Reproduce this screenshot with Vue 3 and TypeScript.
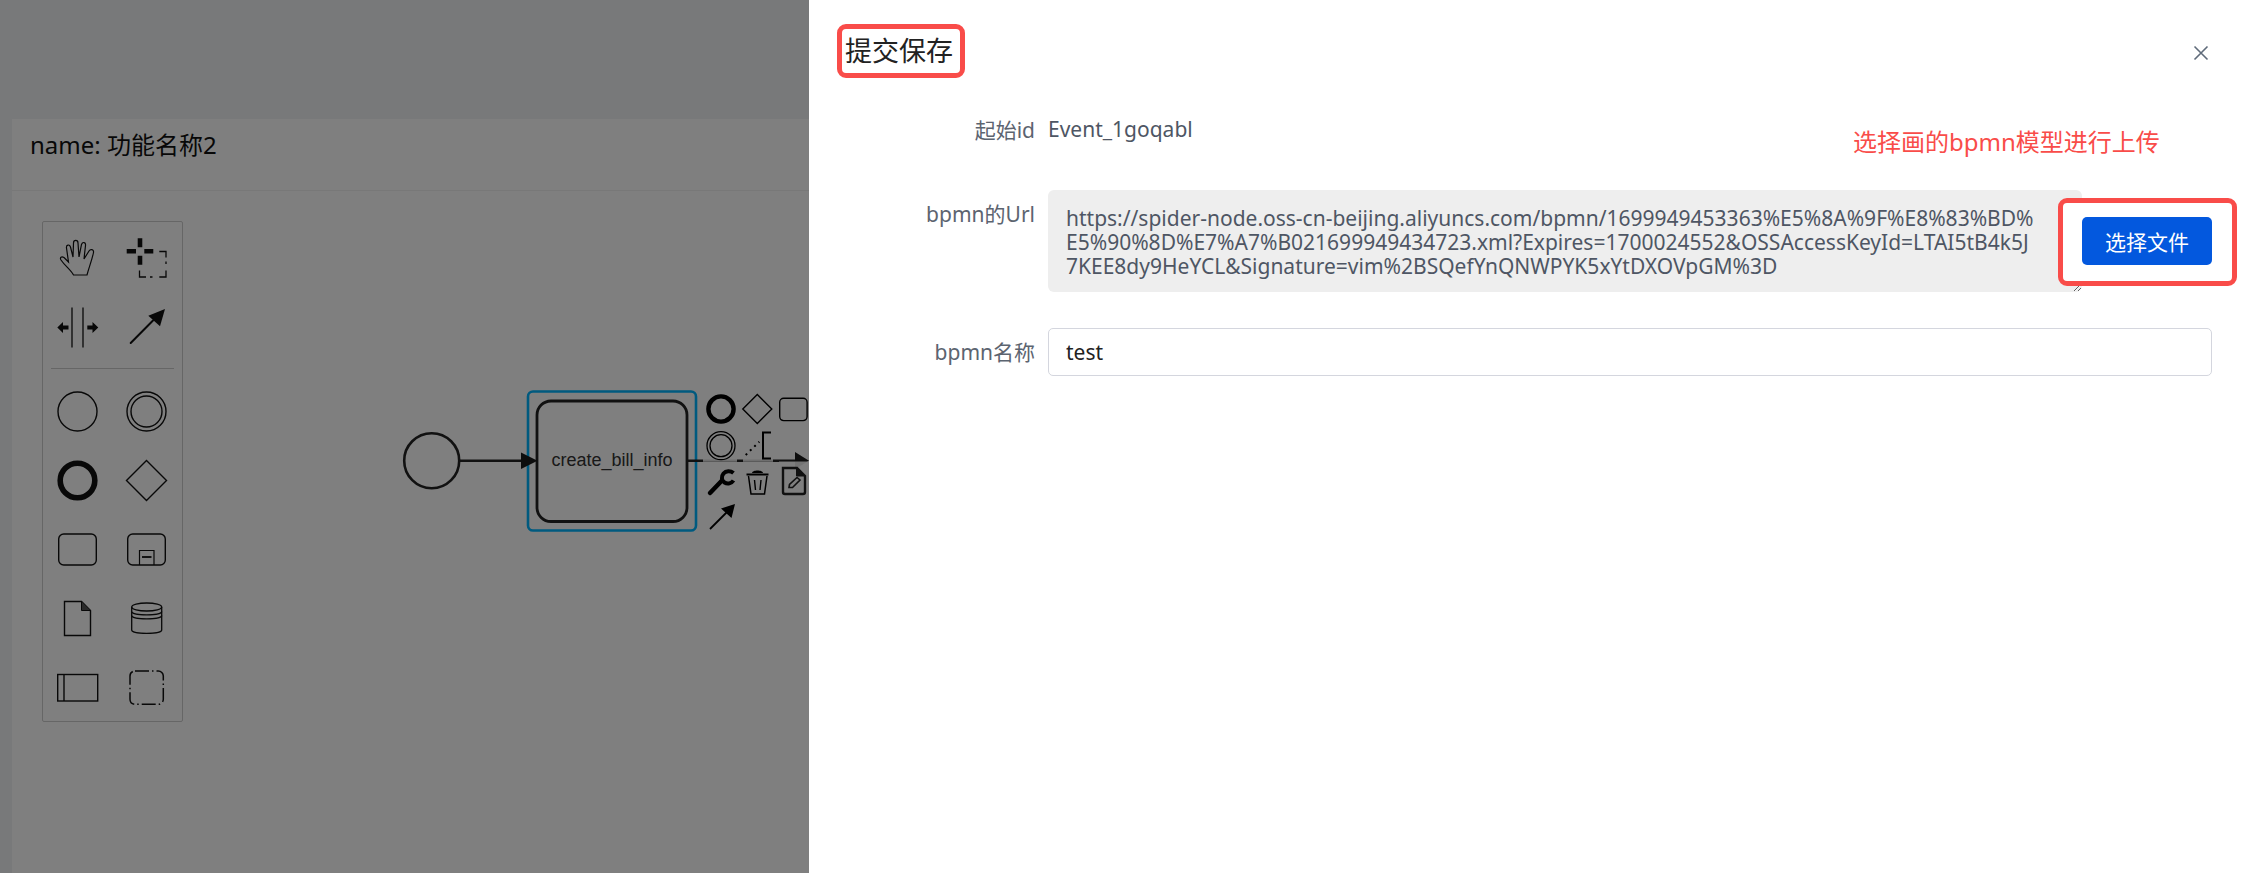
<template>
  <div class="page">
    <div class="card">
      <div class="card-head">name: 功能名称2</div>
      <div class="canvas">
        <!-- diagram uses page coordinates, so the viewBox starts at the canvas origin -->
        <svg class="diagram" width="800" height="680" viewBox="12 192 800 680">
          <rect x="528" y="392.5" width="168" height="139" rx="5" fill="none" stroke="#00b4ff" stroke-width="2.6" />
          <circle cx="431.7" cy="461.7" r="27.5" fill="none" stroke="#222" stroke-width="2.6" />
          <path d="M460 461.7H524" stroke="#222" stroke-width="2.6" />
          <rect x="537" y="402" width="150" height="120.5" rx="14" fill="#fff" fill-opacity="0" stroke="#222" stroke-width="2.8" />
          <path d="M521 453.5L537.5 461.7L521 470Z" fill="#1a1a1a" />
          <text x="612" y="467" text-anchor="middle" class="task-label">create_bill_info</text>

          <path d="M688 461.7H796" stroke="#222" stroke-width="2.6" />
          <path d="M795 453L809 461.7L795 470Z" fill="#1a1a1a" />
          <!-- context pad entries sit over the outgoing flow and wash it out -->
          <rect x="703" y="429" width="34" height="33.5" fill="#fff" fill-opacity="0.85" />
          <rect x="743" y="429" width="30" height="33.5" fill="#fff" fill-opacity="0.85" />
          <rect x="703" y="462.5" width="34" height="36" fill="#fff" fill-opacity="0.85" />
          <rect x="743" y="462.5" width="30" height="36" fill="#fff" fill-opacity="0.85" />
          <rect x="779" y="462.5" width="30" height="36" fill="#fff" fill-opacity="0.9" />

          <circle cx="721" cy="410" r="12.6" fill="none" stroke="#000" stroke-width="4.4" />
          <path d="M757.3 395.5L771.8 410L757.3 424.5L742.8 410Z" fill="none" stroke="#000" stroke-width="1.4" />
          <rect x="779.7" y="399.2" width="27.4" height="22.4" rx="4" fill="none" stroke="#000" stroke-width="1.4" />
          <circle cx="721" cy="446.7" r="14" fill="none" stroke="#000" stroke-width="1.3" />
          <circle cx="721" cy="446.7" r="11" fill="none" stroke="#000" stroke-width="1.3" />
          <path d="M745.7 456L759.3 442.7" stroke="#000" stroke-width="2" stroke-dasharray="2 4" fill="none" />
          <path d="M771 433.5H763V459.5H771" stroke="#000" stroke-width="2" fill="none" />
          <!-- wrench -->
          <path d="M710 494L721.5 482" stroke="#000" stroke-width="4.5" stroke-linecap="round" />
          <path d="M733.5 474C730.5 471.5 726 471.5 723.5 474.5C721 477.5 721.5 481.5 724.5 483.5C727.5 485.5 731.5 484.5 733.5 481.5" fill="none" stroke="#000" stroke-width="4" />
          <!-- trash -->
          <path d="M746.5 475.5H768.5" stroke="#000" stroke-width="2" />
          <path d="M752 474C752 470.5 763 470.5 763 474Z" fill="#000" />
          <path d="M748.5 477L751 495H764.5L767 477" fill="none" stroke="#000" stroke-width="1.5" />
          <path d="M754.5 481L755.5 491M761 481L760 491" stroke="#000" stroke-width="1.4" />
          <!-- doc edit -->
          <path d="M783 469H797L805 477V493Q805 495 803 495H785Q783 495 783 493Z" fill="none" stroke="#222" stroke-width="2.4" />
          <path d="M796.5 469V477H805" fill="#222" stroke="#222" stroke-width="1" />
          <path d="M789 488.5L789.5 485.5L797 478.5L800 481L792.5 488.5Z" fill="none" stroke="#222" stroke-width="1.6" />
          <!-- connect -->
          <path d="M710 530L727 513" stroke="#000" stroke-width="1.8" />
          <path d="M735 505L731.5 519L721 509.5Z" fill="#000" />
        </svg>

        <div class="palette">
          <div class="tools">
            <svg viewBox="0 0 69 69">
              <path d="M30.5 51C28 46 22 42 18 36C16.5 33.5 18.5 32 21 33.5L25.5 38L23.5 24C23 20.5 26.5 20 27.5 23L30 33L30.5 19C30.5 15.5 35 15.5 35 19L36 33L38.5 20.5C39.5 17.5 43 18 42.5 21.5L41 35L46 27C47.5 24.5 51 25.5 50.5 28.5C49 36 46 43 44 51Z" fill="none" stroke="#111" stroke-width="1.2" />
            </svg>
            <svg viewBox="0 0 69 69">
              <path d="M14.7 27.3H24M32.3 27.3H41.3M28 14.3V23.3M28 31.7V40.7" stroke="#111" stroke-width="4.6" fill="none" />
              <path d="M47.3 27.5H54V33.5M54 37.5V40M54 46.5V53H47.3M40.5 53H38M34 53H27.5V46.5" stroke="#111" stroke-width="1.3" fill="none" />
            </svg>
            <svg viewBox="0 0 69 69">
              <path d="M29 14.5V54.5M40 14.5V54.5" stroke="#111" stroke-width="1.3" />
              <path d="M14.3 34.5L20 29V32.5H25.5V36.5H20V40Z" fill="#111" />
              <path d="M55.3 34.5L49.5 29V32.5H44.3V36.5H49.5V40Z" fill="#111" />
            </svg>
            <svg viewBox="0 0 69 69">
              <path d="M18.7 50L41 27.5" stroke="#111" stroke-width="2" stroke-linecap="round" />
              <path d="M53 16L48 33.3L36.3 22.7Z" fill="#111" />
            </svg>
          </div>
          <div class="separator"></div>
          <div class="tools">
            <svg viewBox="0 0 69 69">
              <circle cx="34.5" cy="34.5" r="19.5" fill="none" stroke="#111" stroke-width="1.4" />
            </svg>
            <svg viewBox="0 0 69 69">
              <circle cx="34.5" cy="34.5" r="19.5" fill="none" stroke="#111" stroke-width="1.4" />
              <circle cx="34.5" cy="34.5" r="15.5" fill="none" stroke="#111" stroke-width="1.4" />
            </svg>
            <svg viewBox="0 0 69 69">
              <circle cx="34.5" cy="34.5" r="17.3" fill="none" stroke="#111" stroke-width="5.6" />
            </svg>
            <svg viewBox="0 0 69 69">
              <path d="M34.5 14.5L54.5 34.5L34.5 54.5L14.5 34.5Z" fill="none" stroke="#111" stroke-width="1.4" />
            </svg>
            <svg viewBox="0 0 69 69">
              <rect x="15.7" y="19" width="37.6" height="31" rx="5" fill="none" stroke="#111" stroke-width="1.4" />
            </svg>
            <svg viewBox="0 0 69 69">
              <rect x="15.7" y="19" width="37.6" height="31" rx="5" fill="none" stroke="#111" stroke-width="1.4" />
              <path d="M27.5 50V35.5H42V50" fill="none" stroke="#111" stroke-width="1.2" />
              <path d="M30 42H39.5" stroke="#111" stroke-width="1.8" />
            </svg>
            <svg viewBox="0 0 69 69">
              <path d="M21.5 17.5H38.5L47.5 26.5V51.5H21.5Z" fill="none" stroke="#111" stroke-width="1.4" />
              <path d="M38.5 17.5V26.5H47.5" fill="#555" stroke="#111" stroke-width="1" />
            </svg>
            <svg viewBox="0 0 69 69">
              <path d="M19.7 23V46C19.7 50.5 49.7 50.5 49.7 46V23" fill="none" stroke="#111" stroke-width="1.3" />
              <ellipse cx="34.7" cy="23" rx="15" ry="4" fill="none" stroke="#111" stroke-width="1.3" />
              <path d="M19.7 27.5C19.7 32 49.7 32 49.7 27.5M19.7 31.5C19.7 36 49.7 36 49.7 31.5" fill="none" stroke="#111" stroke-width="1.3" />
            </svg>
            <svg viewBox="0 0 69 69">
              <rect x="14.7" y="21.5" width="40" height="26.5" fill="none" stroke="#111" stroke-width="1.4" />
              <path d="M21 21.5V48" stroke="#111" stroke-width="1.4" />
            </svg>
            <svg viewBox="0 0 69 69">
              <rect x="18" y="18" width="33.3" height="33.3" rx="5" fill="none" stroke="#111" stroke-width="1.5" stroke-dasharray="14 3 1.5 3" />
            </svg>
          </div>
        </div>
      </div>
    </div>

    <div class="overlay"></div>

    <aside class="drawer">
      <header class="drawer-head">
        <h2 class="drawer-title">提交保存</h2>
        <svg class="close" width="16" height="16" viewBox="0 0 16 16">
          <path d="M1.5 1.5L14.5 14.5M14.5 1.5L1.5 14.5" stroke="#5f6b7a" stroke-width="1.6" />
        </svg>
      </header>

      <form class="form" @submit.prevent>
        <label class="label">起始id</label>
        <div class="value">{{ eventId }}</div>

        <label class="label">bpmn的Url</label>
        <div class="url-row">
          <textarea class="url" readonly :value="bpmnUrl"></textarea>
          <div class="mark mark-file"></div>
          <button type="button" class="upload">选择文件</button>
        </div>

        <label class="label">bpmn名称</label>
        <input class="name" type="text" v-model="bpmnName" />
      </form>

      <div class="mark mark-title"></div>
      <div class="note">选择画的bpmn模型进行上传</div>
    </aside>
  </div>
</template>

<script setup lang="ts">
import { ref } from 'vue';

const eventId = 'Event_1goqabl';
const bpmnName = ref('test');
const bpmnUrl = [
  'https://spider-node.oss-cn-beijing.aliyuncs.com/bpmn/1699949453363%E5%8A%9F%E8%83%BD%',
  'E5%90%8D%E7%A7%B021699949434723.xml?Expires=1700024552&OSSAccessKeyId=LTAI5tB4k5J',
  '7KEE8dy9HeYCL&Signature=vim%2BSQefYnQNWPYK5xYtDXOVpGM%3D',
].join('\n');
</script>

<style>
body {
  margin: 0;
}
</style>

<style scoped>
.page {
  position: relative;
  box-sizing: border-box;
  display: flex;
  flex-direction: column;
  width: 2247px;
  height: 873px;
  padding: 119px 12px 0;
  overflow: hidden;
  background: #f0f2f5;
  font-family: "Noto Sans", "Noto Sans CJK SC", sans-serif;
}

.card {
  flex: 1;
  display: flex;
  flex-direction: column;
  background: #fff;
}

.card-head {
  height: 72px;
  padding: 9px 18px 0;
  box-sizing: border-box;
  border-bottom: 1px solid #f0f0f0;
  font-size: 24px;
  line-height: 34px;
  color: #111;
}

.canvas {
  position: relative;
  flex: 1;
}

.diagram {
  position: absolute;
  left: 0;
  top: 0;
}

.task-label {
  font-family: "Liberation Sans", Arial, sans-serif;
  font-size: 18px;
  fill: #333;
}

.palette {
  position: absolute;
  left: 30px;
  top: 30px;
  box-sizing: border-box;
  width: 141px;
  height: 501px;
  padding-top: 2px;
  border: 1px solid #ccc;
  border-radius: 2px;
  background: #fff;
}

.tools {
  display: grid;
  grid-template-columns: 69px 69px;
  grid-auto-rows: 69px;
}

.tools svg {
  width: 69px;
  height: 69px;
  display: block;
}

.separator {
  height: 1px;
  margin: 6px 8px 8px;
  background: #ccc;
}

.overlay {
  position: absolute;
  inset: 0;
  background: rgba(0, 0, 0, 0.5);
}

.drawer {
  position: absolute;
  top: 0;
  right: 0;
  bottom: 0;
  width: 1438px;
  background: #fff;
}

.drawer-head {
  height: 106px;
  box-sizing: border-box;
  padding: 0 38px 0 36px;
  display: flex;
  justify-content: space-between;
  align-items: flex-start;
}

.drawer-title {
  margin: 32px 0 0;
  font-size: 27px;
  line-height: 38px;
  font-weight: 400;
  color: #222;
}

.close {
  margin-top: 45px;
}

.form {
  display: grid;
  grid-template-columns: 226px 1fr;
  column-gap: 13px;
  row-gap: 36px;
  padding-right: 35px;
  font-size: 21px;
}

.label {
  line-height: 48px;
  text-align: right;
  color: #5c6470;
}

.value {
  line-height: 47px;
  color: #4e5664;
}

.url-row {
  position: relative;
  display: flex;
  align-items: center;
  min-width: 0;
}

.url {
  flex: 1;
  min-width: 0;
  box-sizing: border-box;
  height: 102px;
  padding: 16px 18px;
  border: 0;
  border-radius: 6px;
  outline: none;
  overflow: hidden;
  white-space: pre;
  resize: vertical;
  background: #eee;
  font: inherit;
  line-height: 24px;
  color: #4e5664;
}

.upload {
  position: relative;
  width: 130px;
  height: 48px;
  padding: 0;
  border: 0;
  border-radius: 5px;
  background: #0358de;
  font: inherit;
  color: #fff;
}

.name {
  box-sizing: border-box;
  height: 48px;
  padding: 0 17px;
  border: 1px solid #d4d6de;
  border-radius: 5px;
  outline: none;
  font: inherit;
  color: #222;
}

.mark {
  position: absolute;
  box-sizing: border-box;
  border: 5px solid #f94c49;
  border-radius: 9px;
}

.mark-title {
  left: 28px;
  top: 24px;
  width: 128px;
  height: 54px;
}

.mark-file {
  left: 1010px;
  top: 8px;
  width: 179px;
  height: 88px;
  background: #fff;
}

.note {
  position: absolute;
  left: 1044px;
  top: 124px;
  font-size: 24px;
  line-height: 36px;
  color: #f94c49;
}
</style>
